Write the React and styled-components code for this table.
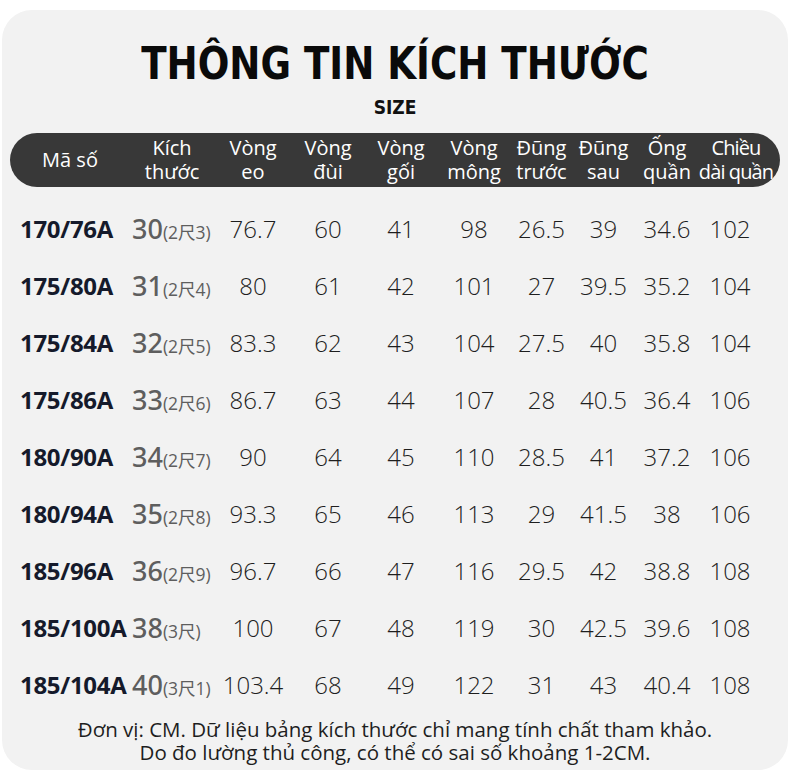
import React from "react";
import styled, { createGlobalStyle } from "styled-components";

const GlobalStyle = createGlobalStyle`
  html, body {
    margin: 0;
    padding: 0;
    background: #ffffff;
  }
  body {
    font-family: "Open Sans", "Noto Sans", "Noto Sans CJK SC", sans-serif;
  }
`;

const COLS = "120px 84px 78px 72px 74px 72px 63px 61px 66px 80px";

const headers = [
  ["Mã số"],
  ["Kích", "thước"],
  ["Vòng", "eo"],
  ["Vòng", "đùi"],
  ["Vòng", "gối"],
  ["Vòng", "mông"],
  ["Đũng", "trước"],
  ["Đũng", "sau"],
  ["Ống", "quần"],
  ["Chiều", "dài quần"],
];

const rows = [
  ["170/76A", "30", "(2尺3)", "76.7", "60", "41", "98", "26.5", "39", "34.6", "102"],
  ["175/80A", "31", "(2尺4)", "80", "61", "42", "101", "27", "39.5", "35.2", "104"],
  ["175/84A", "32", "(2尺5)", "83.3", "62", "43", "104", "27.5", "40", "35.8", "104"],
  ["175/86A", "33", "(2尺6)", "86.7", "63", "44", "107", "28", "40.5", "36.4", "106"],
  ["180/90A", "34", "(2尺7)", "90", "64", "45", "110", "28.5", "41", "37.2", "106"],
  ["180/94A", "35", "(2尺8)", "93.3", "65", "46", "113", "29", "41.5", "38", "106"],
  ["185/96A", "36", "(2尺9)", "96.7", "66", "47", "116", "29.5", "42", "38.8", "108"],
  ["185/100A", "38", "(3尺)", "100", "67", "48", "119", "30", "42.5", "39.6", "108"],
  ["185/104A", "40", "(3尺1)", "103.4", "68", "49", "122", "31", "43", "40.4", "108"],
];

const Card = styled.div`
  margin: 10px 2px 7px;
  height: 760px;
  background: #f2f2f2;
  border-radius: 30px;
  padding: 0 8px;
  box-sizing: border-box;
  display: flex;
  flex-direction: column;
`;

const TitleWrap = styled.div`
  margin-top: 28px;
  display: flex;
  justify-content: center;
`;

const Title = styled.h1`
  margin: 0;
  display: inline-block;
  transform: scaleX(0.94);
  font-family: "Liberation Sans Narrow", "DejaVu Sans", sans-serif;
  font-stretch: condensed;
  font-weight: 700;
  font-size: 44px;
  line-height: 52px;
  color: #0a0a0a;
  white-space: nowrap;
`;

const Sub = styled.div`
  margin-top: 5px;
  text-align: center;
  font-family: "Liberation Sans Narrow", "DejaVu Sans", sans-serif;
  font-stretch: condensed;
  font-weight: 700;
  font-size: 19px;
  line-height: 24px;
  color: #111;
`;

const HeaderBar = styled.div`
  margin-top: 14px;
  height: 54px;
  background: #383838;
  border-radius: 27px;
  display: grid;
  grid-template-columns: ${COLS};
  align-items: center;
`;

const HeadCell = styled.div`
  display: flex;
  flex-direction: column;
  align-items: center;
  color: #ffffff;
  font-size: 20px;
  line-height: 24px;
  white-space: nowrap;
  letter-spacing: ${(p) => (p.$tight ? "-0.9px" : "0")};
  padding-right: ${(p) => (p.$tight ? "8px" : "0")};
`;

const Body = styled.div`
  margin-top: 13px;
  display: flex;
  flex-direction: column;
`;

const Row = styled.div`
  height: 57px;
  display: grid;
  grid-template-columns: ${COLS};
  align-items: center;
`;

const Code = styled.div`
  padding-left: 10px;
  font-size: 24px;
  font-weight: 700;
  color: #151a2b;
  white-space: nowrap;
  letter-spacing: -0.3px;
`;

const SizeCell = styled.div`
  padding-left: 2px;
  white-space: nowrap;
  color: #5e5e5e;
  display: flex;
  align-items: baseline;
`;

const Big = styled.span`
  font-family: "Noto Sans", "Open Sans", sans-serif;
  font-size: 27px;
  font-weight: 500;
`;

const Small = styled.span`
  font-size: 17.5px;
  font-family: "Open Sans", "Noto Sans CJK SC", sans-serif;
`;

const Value = styled.div`
  text-align: center;
  font-size: 24px;
  font-weight: 300;
  color: #1e1e1e;
  white-space: nowrap;
  padding-right: ${(p) => (p.$last ? "20px" : "0")};
`;

const Note = styled.div`
  margin-top: 5px;
  text-align: center;
  font-size: 20.5px;
  line-height: 23px;
  color: #1e1e1e;
  white-space: nowrap;
`;

export default function App() {
  return (
    <>
      <GlobalStyle />
      <Card>
        <TitleWrap>
          <Title>THÔNG TIN KÍCH THƯỚC</Title>
        </TitleWrap>
        <Sub>SIZE</Sub>
        <HeaderBar>
          {headers.map((h, i) => (
            <HeadCell key={i} $tight={i === headers.length - 1}>
              {h.map((line, j) => (
                <span key={j}>{line}</span>
              ))}
            </HeadCell>
          ))}
        </HeaderBar>
        <Body>
          {rows.map((r) => (
            <Row key={r[0]}>
              <Code>{r[0]}</Code>
              <SizeCell>
                <Big>{r[1]}</Big>
                <Small>{r[2]}</Small>
              </SizeCell>
              {r.slice(3).map((v, i, arr) => (
                <Value key={i} $last={i === arr.length - 1}>
                  {v}
                </Value>
              ))}
            </Row>
          ))}
        </Body>
        <Note>
          Đơn vị: CM. Dữ liệu bảng kích thước chỉ mang tính chất tham khảo.
          <br />
          Do đo lường thủ công, có thể có sai số khoảng 1-2CM.
        </Note>
      </Card>
    </>
  );
}
